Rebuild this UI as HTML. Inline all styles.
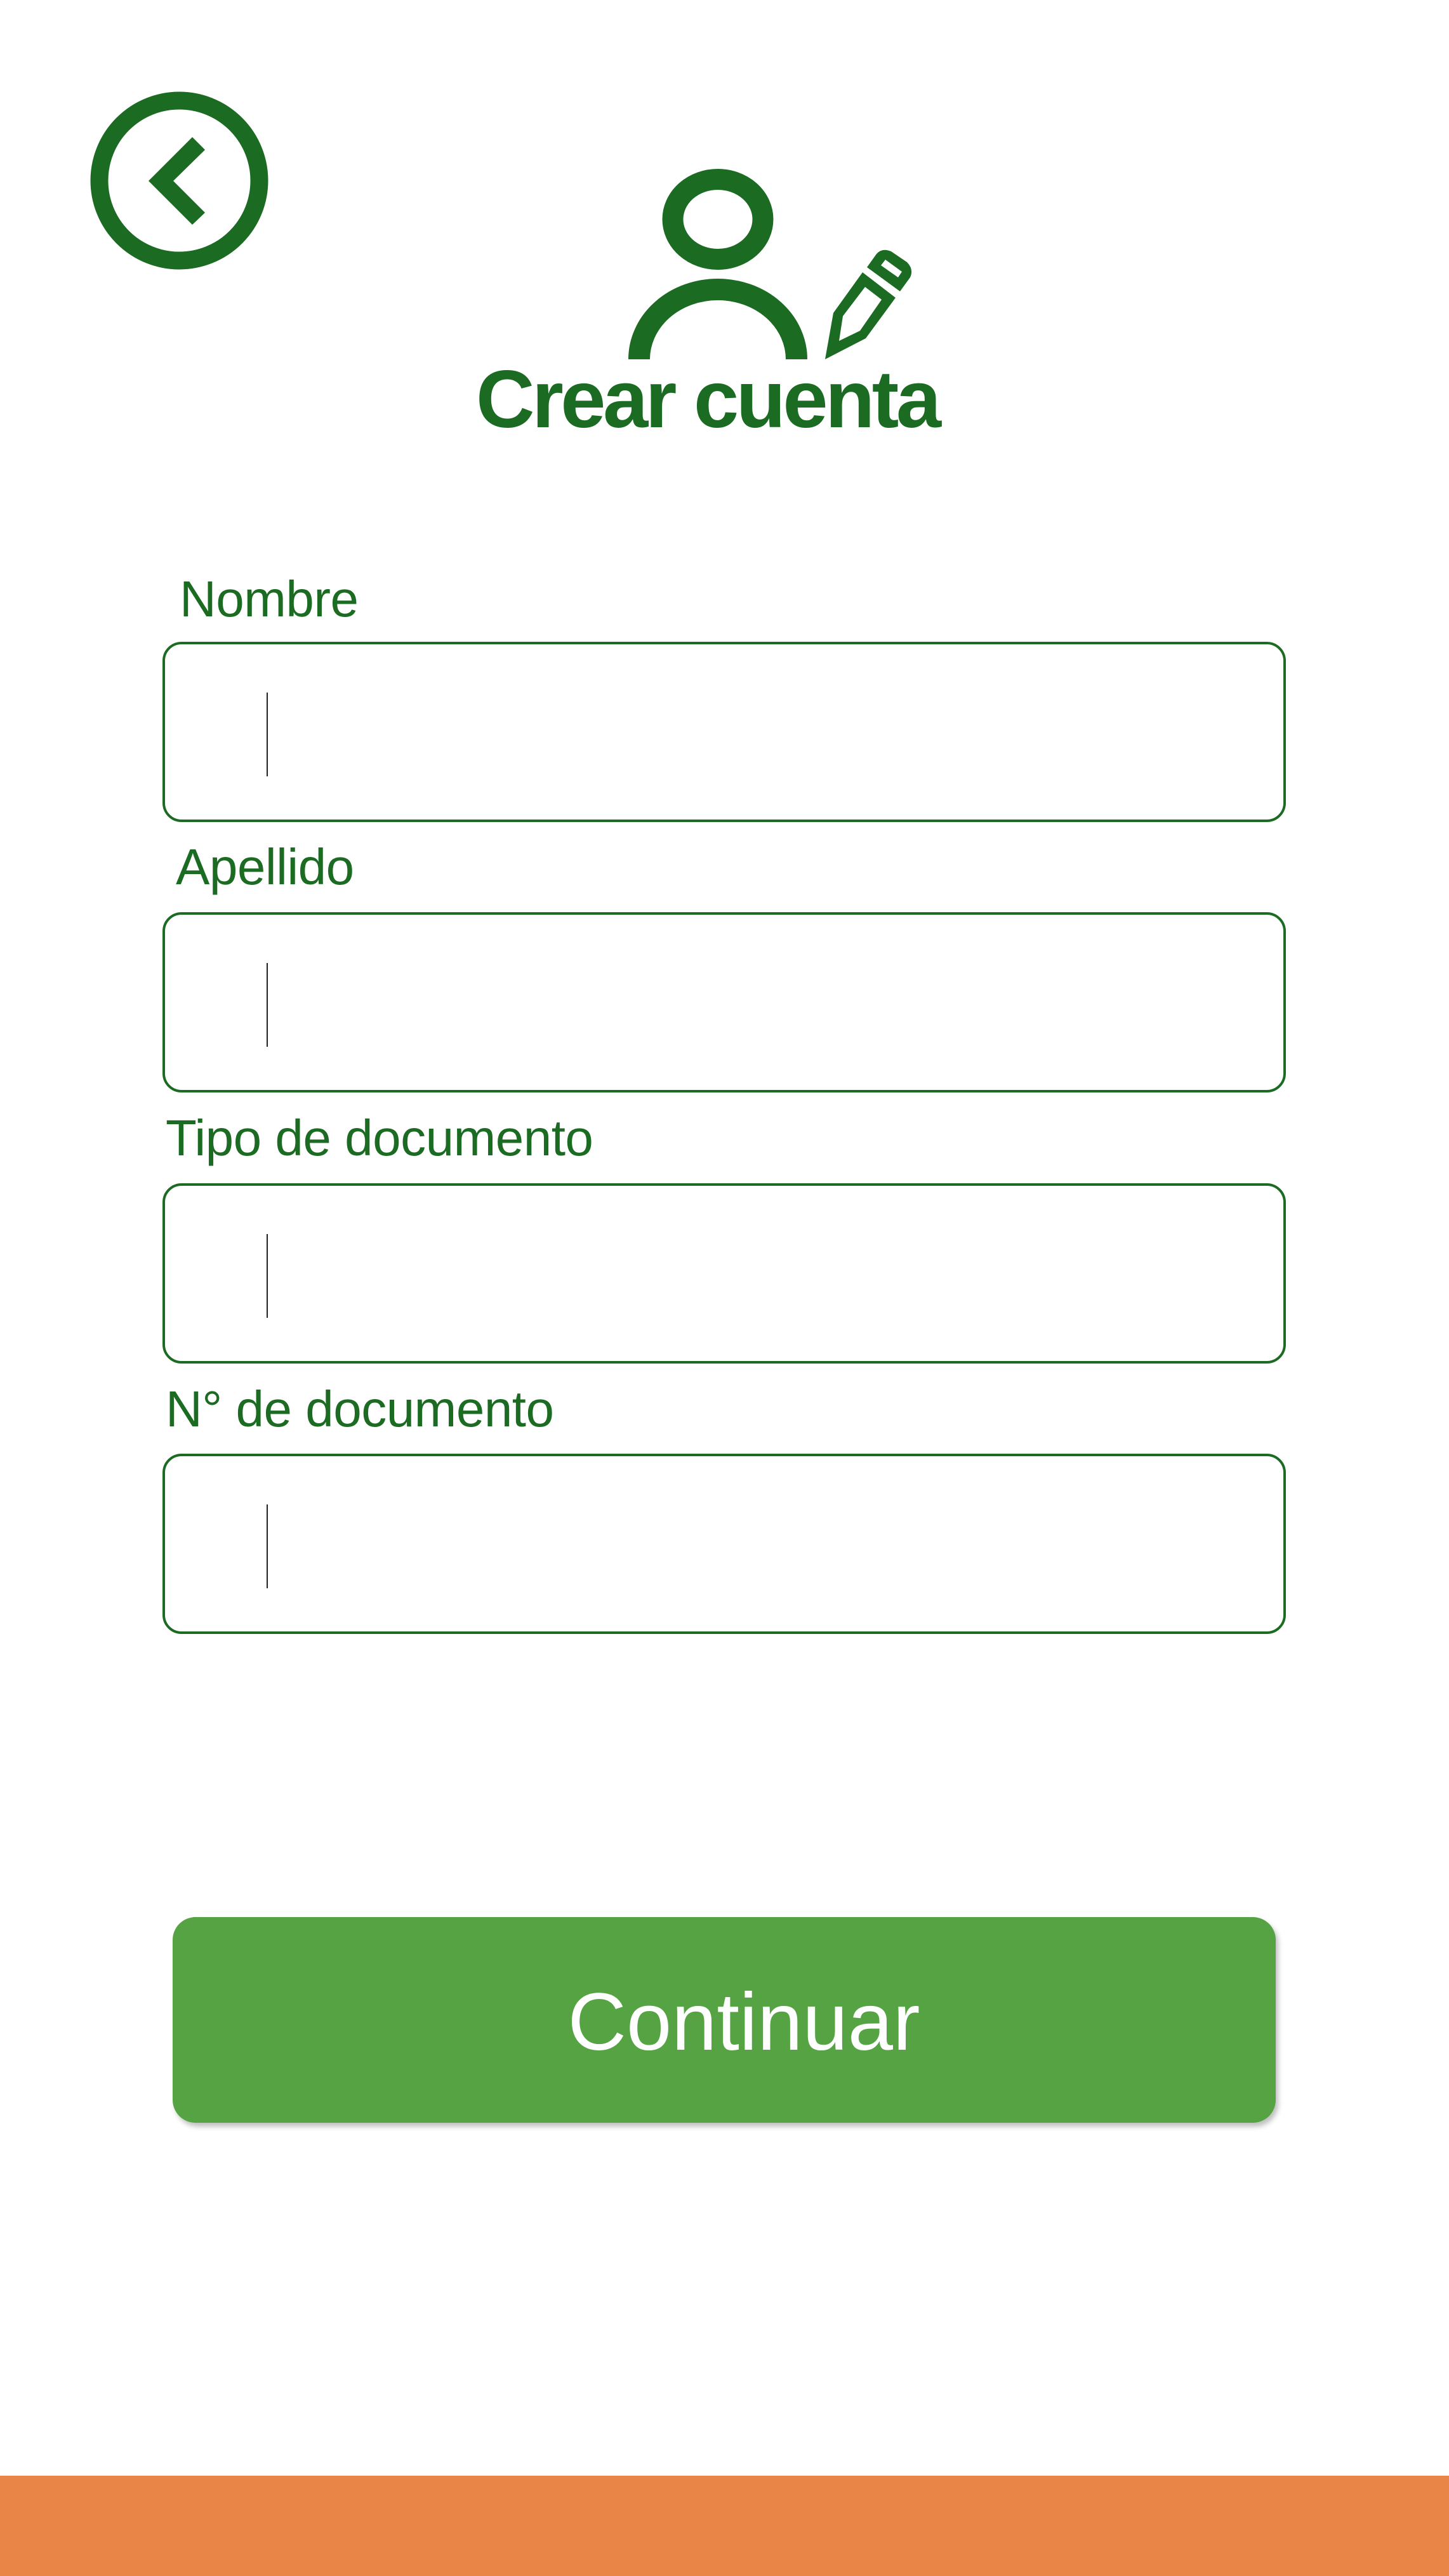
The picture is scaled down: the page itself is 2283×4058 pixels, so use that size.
<!DOCTYPE html>
<html><head><meta charset="utf-8"><style>
html,body{margin:0;padding:0}
body{width:2283px;height:4058px;position:relative;background:#fff;overflow:hidden;font-family:"Liberation Sans",sans-serif;color:#1b6b22}
.lbl{position:absolute;font-size:80px;line-height:1;letter-spacing:-0.5px;white-space:nowrap}
.box{position:absolute;left:256px;width:1762px;height:276px;border:4px solid #1b6b22;border-radius:30px}
.cur{position:absolute;left:160px;top:76px;width:2px;height:132px;background:#222}
.title{position:absolute;left:750px;top:566px;font-size:128px;font-weight:bold;letter-spacing:-4.5px;line-height:1;white-space:nowrap}
.btn{position:absolute;left:272px;top:3020px;width:1738px;height:324px;background:#55a343;border-radius:36px;box-shadow:4px 6px 8px rgba(0,0,0,.25)}
.btn span{position:absolute;left:0;right:0;top:102px;text-align:center;color:#fff;font-size:128px;line-height:1;padding-left:62px}
.bar{position:absolute;left:0;top:3900px;width:2283px;height:158px;background:#e98546}
</style></head><body>
<svg width="2283" height="700" style="position:absolute;left:0;top:0">
<circle cx="282.5" cy="284.5" r="126" fill="none" stroke="#1b6b22" stroke-width="28"/>
<polygon points="234,285 303,216 323,236 273,285 323,335 303,354" fill="#1b6b22"/>
<ellipse cx="1131" cy="345.5" rx="71" ry="63" fill="none" stroke="#1b6b22" stroke-width="33"/>
<path d="M1007 566 A124 110 0 0 1 1255 566" fill="none" stroke="#1b6b22" stroke-width="34"/>
<path fill="#1b6b22" fill-rule="evenodd" d="M1300 566 L1313 493 L1359 429 L1411 469 L1364 533 Z M1322 537 L1355 521 L1389 472 L1363 452 L1328 498 Z"/>
<path fill="#1b6b22" fill-rule="evenodd" d="M1366 421 L1381 400 Q1390 390 1404 396 L1429 413 Q1440 424 1434 437 L1418 459 Z M1388 418 L1415 437 L1421 428 L1395 409 Z"/>
</svg>
<div class="title">Crear cuenta</div>
<div class="lbl" style="left:283px;top:904px">Nombre</div>
<div class="box" style="top:1011px"><div class="cur"></div></div>
<div class="lbl" style="left:277px;top:1326px">Apellido</div>
<div class="box" style="top:1437px"><div class="cur"></div></div>
<div class="lbl" style="left:261px;top:1753px">Tipo de documento</div>
<div class="box" style="top:1864px"><div class="cur"></div></div>
<div class="lbl" style="left:261px;top:2180px">N° de documento</div>
<div class="box" style="top:2290px"><div class="cur"></div></div>
<div class="btn"><span>Continuar</span></div>
<div class="bar"></div>
</body></html>
